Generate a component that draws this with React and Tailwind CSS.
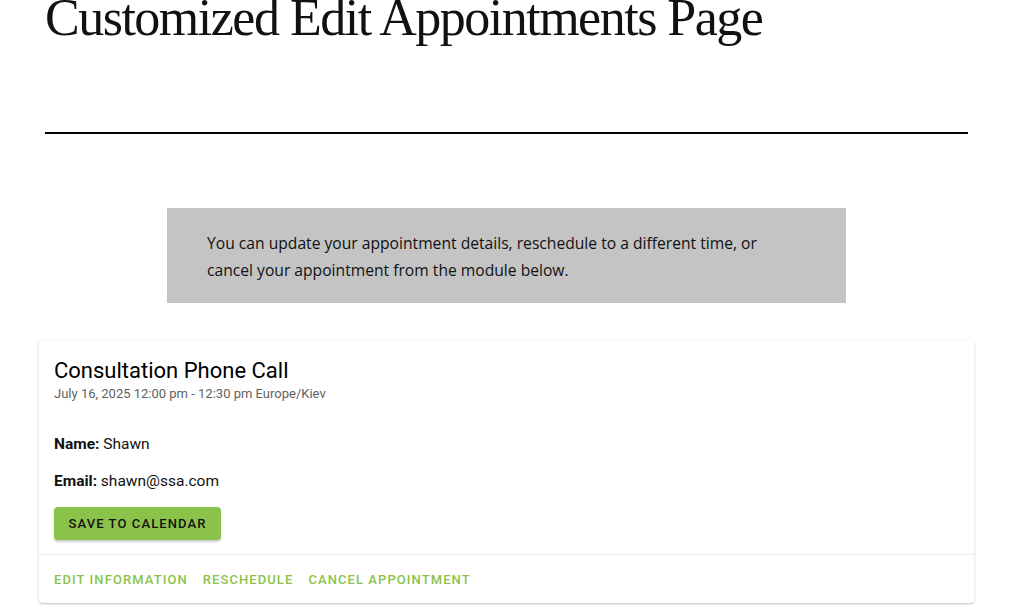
import React from 'react';

const App = () => {
    return (
        <div className="min-h-screen bg-white">
            <div className="px-[45px] pr-[56px]">
                <h1 className="font-['Liberation_Serif',serif] text-[52px] font-light leading-[40px] text-[#111] tracking-[-1.5px] -mt-[2px]">
                    Customized Edit Appointments Page
                </h1>
                <hr className="mt-[94px] border-0 border-t-2 border-black" />
            </div>

            <div className="mx-[167px] mt-[74px] w-[679px] bg-[#c4c4c4] px-[40px] pt-[22px] pb-[19px] font-['Open_Sans',sans-serif] text-[15.65px] leading-[27px] text-[#111]">
                <p>
                    You can update your appointment details, reschedule to a different time, or
                    <br />
                    cancel your appointment from the module below.
                </p>
            </div>

            <div className="mx-[39px] mt-[37px] w-[935px] rounded-[4px] bg-white shadow-[0_1px_3px_rgba(0,0,0,0.2),0_1px_1px_rgba(0,0,0,0.06)] font-['Roboto',sans-serif]">
                <div className="px-[15px] pt-[17px] pb-[14px]">
                    <h2 className="text-[22px] leading-[28px] text-black">Consultation Phone Call</h2>
                    <p className="text-[13px] leading-[18px] text-[#616161]">July 16, 2025 12:00 pm - 12:30 pm Europe/Kiev</p>

                    <p className="mt-[31px] text-[15.5px] leading-[20px] text-[#111]">
                        <span className="font-bold">Name:</span> Shawn
                    </p>
                    <p className="mt-[17px] text-[15.5px] leading-[20px] text-[#111]">
                        <span className="font-bold">Email:</span> shawn@ssa.com
                    </p>

                    <button className="mt-[16px] h-[33px] w-[167px] rounded-[4px] bg-[#8bc34a] text-[13px] font-medium uppercase tracking-[1.1px] text-[#111] shadow-[0_2px_2px_rgba(0,0,0,0.2)]">
                        Save to Calendar
                    </button>
                </div>
                <div className="border-t border-[#ececec] px-[15px] pt-[17px] pb-[15px] flex gap-[15px] text-[13px] font-medium uppercase tracking-[1.08px] leading-[16px] text-[#8bc34a]">
                    <span>Edit Information</span>
                    <span>Reschedule</span>
                    <span>Cancel Appointment</span>
                </div>
            </div>
        </div>
    );
};

export default App;
